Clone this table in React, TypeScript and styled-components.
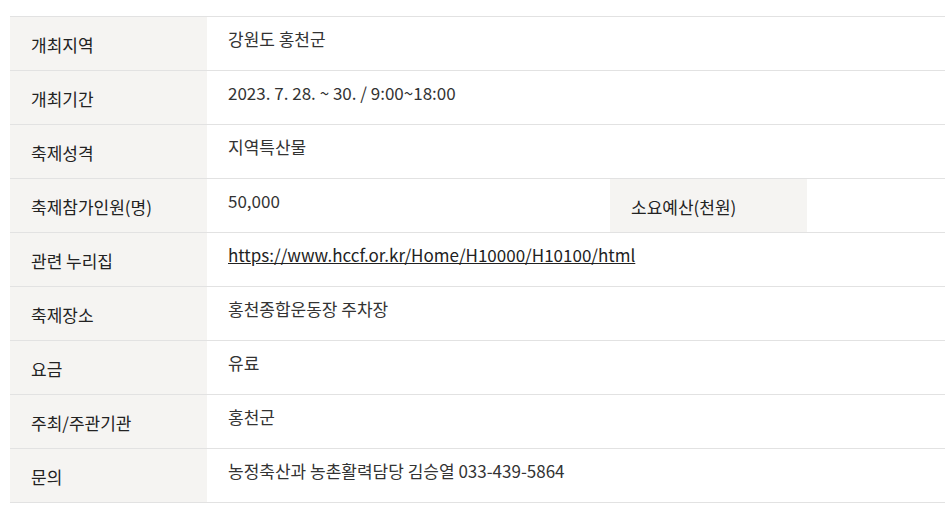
import styled, { createGlobalStyle } from "styled-components";

const GlobalStyle = createGlobalStyle`
  body {
    margin: 0;
    background: #fff;
    font-family: "Noto Sans CJK KR", "Noto Sans", sans-serif;
  }
`;

const Wrap = styled.div`
  padding: 16px 0 0 10px;
`;

const Table = styled.table`
  width: 100%;
  border-collapse: collapse;
  table-layout: fixed;
  border-top: 1px solid #e2e2e2;
  font-size: 17px;
  line-height: 26px;
`;

const Row = styled.tr`
  border-bottom: 1px solid #e2e2e2;
  height: 54px;
`;

const Th = styled.th`
  background: #f5f4f2;
  color: #222;
  font-weight: 400;
  text-align: left;
  padding: 2px 21px 0;
  vertical-align: middle;
`;

const Td = styled.td`
  color: #333;
  padding: 9px 21px 0;
  vertical-align: top;
`;

const A = styled.a`
  color: #222;
  text-decoration: underline;
`;

interface Item {
  label: string;
  value: React.ReactNode;
}

const items: Item[] = [
  { label: "개최지역", value: "강원도 홍천군" },
  { label: "개최기간", value: "2023. 7. 28. ~ 30. / 9:00~18:00" },
  { label: "축제성격", value: "지역특산물" },
];

const rest: Item[] = [
  {
    label: "관련 누리집",
    value: (
      <A href="https://www.hccf.or.kr/Home/H10000/H10100/html">
        https://www.hccf.or.kr/Home/H10000/H10100/html
      </A>
    ),
  },
  { label: "축제장소", value: "홍천종합운동장 주차장" },
  { label: "요금", value: "유료" },
  { label: "주최/주관기관", value: "홍천군" },
  { label: "문의", value: "농정축산과 농촌활력담당 김승열 033-439-5864" },
];

function App() {
  return (
    <>
      <GlobalStyle />
      <Wrap>
        <Table>
          <colgroup>
            <col style={{ width: 197 }} />
            <col style={{ width: 403 }} />
            <col style={{ width: 197 }} />
            <col />
          </colgroup>
          <tbody>
            {items.map((it) => (
              <Row key={it.label}>
                <Th>{it.label}</Th>
                <Td colSpan={3}>{it.value}</Td>
              </Row>
            ))}
            <Row>
              <Th>축제참가인원(명)</Th>
              <Td>50,000</Td>
              <Th>소요예산(천원)</Th>
              <Td></Td>
            </Row>
            {rest.map((it) => (
              <Row key={it.label}>
                <Th>{it.label}</Th>
                <Td colSpan={3}>{it.value}</Td>
              </Row>
            ))}
          </tbody>
        </Table>
      </Wrap>
    </>
  );
}

export default App;
